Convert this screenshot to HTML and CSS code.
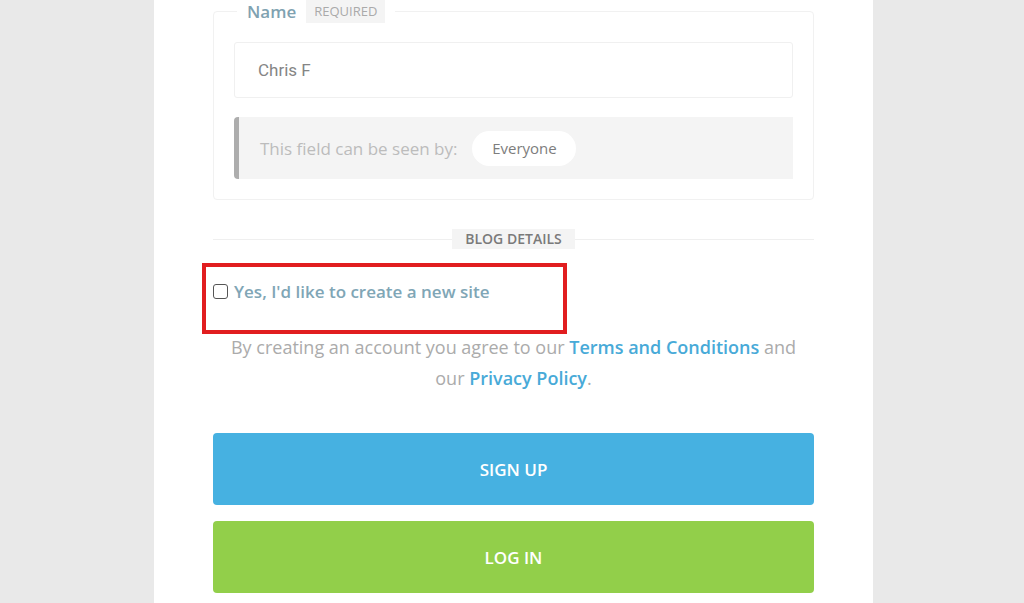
FILE: index.html
```html
<!DOCTYPE html>
<html>
<head>
<meta charset="utf-8">
<link rel="stylesheet" href="styles.css">
</head>
<body>
<div class="page">
  <main class="panel">
    <fieldset class="field">
      <legend class="legend"><span class="legend-name">Name</span><span class="badge">REQUIRED</span></legend>
      <div class="input">Chris F</div>
      <div class="visibility">
        <span class="vis-label">This field can be seen by:</span>
        <span class="pill">Everyone</span>
      </div>
    </fieldset>

    <div class="section-head">
      <span class="section-label">BLOG DETAILS</span>
    </div>

    <div class="highlight">
      <label class="check-row">
        <span class="checkbox"></span>
        <span class="check-text">Yes, I'd like to create a new site</span>
      </label>
    </div>

    <p class="terms">By creating an account you agree to our <a class="link">Terms and Conditions</a> and our <a class="link">Privacy Policy</a>.</p>

    <div class="actions">
      <button class="btn btn-signup">SIGN UP</button>
      <button class="btn btn-login">LOG IN</button>
    </div>
  </main>
</div>
</body>
</html>
```

FILE: styles.css
```css
html, body {
  margin: 0;
  padding: 0;
}
body {
  background: #e9e9e9;
  font-family: "Open Sans", "Liberation Sans", sans-serif;
  height: 603px;
  overflow: hidden;
}
.page {
  display: flex;
  padding-left: 154px;
}
.panel {
  width: 601px;
  background: #fff;
  padding: 0 59px;
  height: 603px;
}
.field {
  margin: 0;
  padding: 0 20px 20px 20px;
  border: 1px solid #f1f1f1;
  border-radius: 4px;
  min-width: 0;
}
.legend {
  padding: 0 10px;
  margin-left: 3px;
  display: flex;
  align-items: center;
}
.legend-name {
  font-size: 17px;
  font-weight: 600;
  color: #7fa2b1;
  line-height: 22px;
}
.badge {
  margin-left: 10px;
  background: #f4f4f4;
  color: #aaa;
  font-size: 13px;
  line-height: 23px;
  padding: 0 8px;
}
.input {
  margin-top: 19px;
  height: 56px;
  box-sizing: border-box;
  border: 1px solid #f0f0f0;
  border-radius: 3px;
  font-family: Roboto, "Liberation Sans", sans-serif;
  font-size: 17px;
  color: #858585;
  display: flex;
  align-items: center;
  padding-left: 23px;
}
.visibility {
  margin-top: 19px;
  height: 62px;
  background: #f4f4f4;
  border-left: 5px solid #adadad;
  border-radius: 4px 0 0 4px;
  display: flex;
  align-items: center;
  padding-left: 21px;
}
.vis-label {
  font-size: 17px;
  color: #bcbcbc;
}
.pill {
  margin-left: 15px;
  background: #fff;
  border-radius: 18px;
  height: 35px;
  width: 104px;
  display: flex;
  align-items: center;
  justify-content: center;
  font-size: 15px;
  color: #7d7d7d;
}
.section-head {
  margin-top: 29px;
  display: flex;
  align-items: center;
  justify-content: center;
  position: relative;
  height: 20px;
}
.section-head::before {
  content: "";
  position: absolute;
  left: 0;
  right: 0;
  top: 10px;
  height: 1px;
  background: #efefef;
}
.section-label {
  position: relative;
  background: #f4f4f4;
  font-size: 14px;
  font-weight: 600;
  color: #7a7a7a;
  line-height: 20px;
  padding: 0 13px;
}
.highlight {
  margin-top: 14px;
  margin-left: -11px;
  width: 357px;
  height: 63px;
  border: 4px solid #e11d1f;
  box-sizing: content-box;
}
.check-row {
  display: flex;
  align-items: center;
  padding-left: 7px;
  margin-top: 13px;
  height: 22px;
}
.checkbox {
  width: 13px;
  height: 13px;
  border: 1.5px solid #555;
  border-radius: 3px;
  flex: none;
}
.check-text {
  margin-left: 6px;
  font-size: 17px;
  font-weight: 600;
  color: #80a6b6;
}
.terms {
  margin: -2px 0 0 0;
  padding: 0 6px;
  text-align: center;
  font-size: 18px;
  line-height: 31px;
  color: #ababab;
}
.link {
  color: #48aad8;
  font-weight: 600;
  text-decoration: none;
}
.actions {
  margin-top: 39px;
  display: flex;
  flex-direction: column;
  gap: 16px;
}
.btn {
  height: 72px;
  border: none;
  border-radius: 4px;
  color: #fff;
  font-family: "Open Sans", "Liberation Sans", sans-serif;
  font-size: 17px;
  font-weight: 600;
  width: 100%;
}
.btn-signup {
  background: #46b1e1;
}
.btn-login {
  background: #92cf4a;
}
```
